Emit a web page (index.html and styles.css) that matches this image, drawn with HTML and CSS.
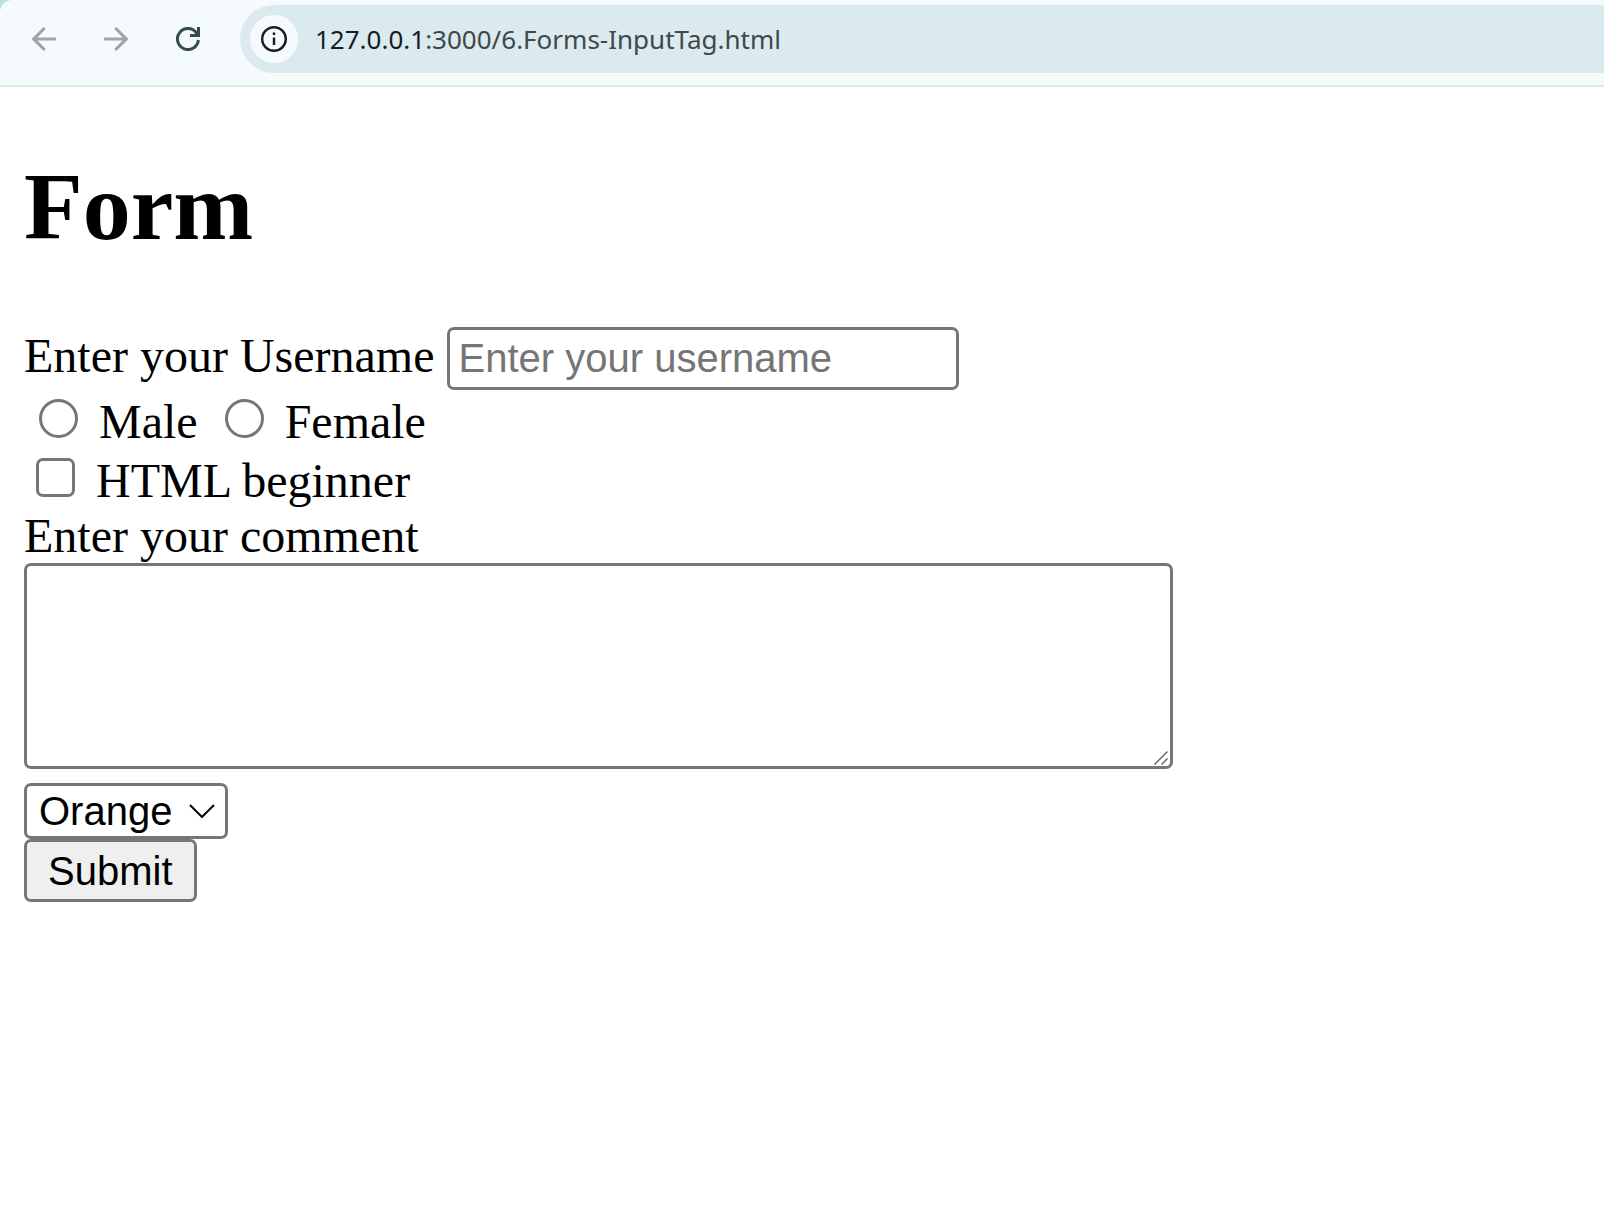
FILE: index.html
```html
<!DOCTYPE html>
<html lang="en">
<head>
<meta charset="utf-8">
<title>Form</title>
<link rel="stylesheet" href="styles.css">
</head>
<body>
<header class="browser">
  <nav class="toolbar" aria-label="Browser">
    <button class="tool" type="button" aria-label="Back" disabled>
      <svg viewBox="0 0 24 24" width="24" height="24"><path d="M24 12H2M12.7 1L1.7 12l11 11" fill="none" stroke="currentColor" stroke-width="3"/></svg>
    </button>
    <button class="tool" type="button" aria-label="Forward" disabled>
      <svg viewBox="0 0 24 24" width="24" height="24"><path d="M0 12h22M11.3 1l11 11-11 11" fill="none" stroke="currentColor" stroke-width="3"/></svg>
    </button>
    <button class="tool tool-reload" type="button" aria-label="Reload">
      <svg viewBox="0 0 24 24" width="24" height="24"><path d="M22.4 13A10.5 10.5 0 1 1 20.2 5.5L22.4 8M22.5 0V8.6H14" fill="none" stroke="currentColor" stroke-width="3"/></svg>
    </button>
    <div class="address">
      <button class="site-info" type="button" aria-label="Site information">
        <svg viewBox="0 0 26 26" width="26" height="26"><circle cx="13" cy="13" r="11.8" fill="none" stroke="currentColor" stroke-width="2.4"/><path d="M11.8 11.5h2.4V19h-2.4zM11.8 6.6h2.4V9h-2.4z" fill="currentColor"/></svg>
      </button>
      <span class="url"><span class="host">127.0.0.1</span>:3000/6.Forms-InputTag.html</span>
    </div>
  </nav>
</header>
<main class="page">
  <h1 class="title">Form</h1>
  <form class="form">
    <div class="row row-name">
      <label for="username">Enter your Username</label>
      <input class="control text-input" id="username" type="text" placeholder="Enter your username">
    </div>
    <div class="row row-gender">
      <input class="choice radio" type="radio" id="male" name="gender"><label for="male">Male</label>
      <input class="choice radio radio-next" type="radio" id="female" name="gender"><label for="female">Female</label>
    </div>
    <div class="row row-level">
      <input class="choice checkbox" type="checkbox" id="beginner"><label for="beginner">HTML beginner</label>
    </div>
    <label class="comment-label" for="comment">Enter your comment</label>
    <div class="comment-box">
      <textarea class="control comment" id="comment"></textarea>
      <svg class="grip" viewBox="0 0 14 14" width="14" height="14" aria-hidden="true"><path d="M.5 13.5l13-13M7.5 13.5l6-6" stroke="#5c5c5c" stroke-width="1.4"/></svg>
    </div>
    <div class="select-box">
      <select class="control fruit" aria-label="Fruit"><option>Orange</option></select>
      <svg class="chevron" viewBox="0 0 26 14" width="26" height="14" aria-hidden="true"><path d="M1 1l12 12L25 1" fill="none" stroke="#000" stroke-width="2"/></svg>
    </div>
    <button class="control submit" type="submit">Submit</button>
  </form>
</main>
</body>
</html>
```
FILE: styles.css
```css
* {
  box-sizing: border-box;
}

body {
  margin: 0;
  background: #fff;
  color: #000;
  font-family: "Liberation Serif", "Times New Roman", serif;
  font-size: 48px;
  line-height: 54px;
}

svg {
  display: block;
}

.browser {
  background: #b9dfe8;
}

.toolbar {
  display: flex;
  align-items: center;
  padding: 5px 0 12px 32px;
  background: #f5fbfd;
  border-bottom: 2px solid #dbe7e9;
  border-top-left-radius: 12px;
}

.tool {
  flex: none;
  margin: 0 48px 0 0;
  padding: 0;
  border: 0;
  background: none;
  color: #9fa4a6;
}

.tool-reload {
  margin-right: 40px;
  color: #344c50;
}

.address {
  display: flex;
  flex: 1;
  align-items: center;
  gap: 17px;
  height: 68px;
  padding-left: 10px;
  border-radius: 34px 0 0 34px;
  background: #dbeaee;
}

.site-info {
  display: grid;
  place-items: center;
  width: 48px;
  height: 48px;
  padding: 0;
  border: 0;
  border-radius: 50%;
  background: #f5fbfd;
  color: #171d1e;
}

.url {
  color: #40484a;
  font-family: "Segoe UI", "Noto Sans", sans-serif;
  font-size: 26px;
  line-height: 36px;
}

.host {
  color: #171d1e;
}

.page {
  padding: 64px 24px 24px;
}

.title {
  margin: 0 0 64px;
  font-size: 96px;
  line-height: 112px;
}

.row {
  display: flex;
  align-items: flex-start;
}

.row-name {
  align-items: baseline;
  gap: 12px;
  padding-bottom: 5px;
}

.row-gender {
  padding: 0 0 5px 15px;
}

.row-level {
  padding: 0 0 1px 12px;
}

.control {
  margin: 0;
  border: 3px solid #767676;
  border-radius: 7px;
  background: #fff;
  color: #000;
  font-family: "Liberation Sans", Arial, sans-serif;
  font-size: 40px;
  line-height: 46px;
}

.text-input {
  width: 512px;
  height: 63px;
  padding: 3px 9px;
}

.text-input::placeholder {
  color: #757575;
}

.choice {
  appearance: none;
  flex: none;
  width: 39px;
  height: 39px;
  margin: 4px 21px 0 0;
  border: 3px solid #767676;
  background: #fff;
}

.radio {
  border-radius: 50%;
}

.radio-next {
  margin-left: 27px;
}

.checkbox {
  border-radius: 7px;
}

.comment-label {
  display: block;
}

.comment-box {
  position: relative;
  width: 1149px;
  max-width: 100%;
  margin-bottom: 14px;
}

.comment {
  display: block;
  width: 100%;
  height: 206px;
  padding: 6px;
  resize: none;
}

.grip {
  position: absolute;
  right: 5px;
  bottom: 4px;
}

.select-box {
  position: relative;
  width: 204px;
}

.fruit {
  display: block;
  appearance: none;
  width: 100%;
  height: 56px;
  padding: 0 12px;
}

.chevron {
  position: absolute;
  right: 13px;
  top: 21px;
  pointer-events: none;
}

.submit {
  display: block;
  height: 63px;
  padding: 3px 21px;
  background: #efefef;
}
```
